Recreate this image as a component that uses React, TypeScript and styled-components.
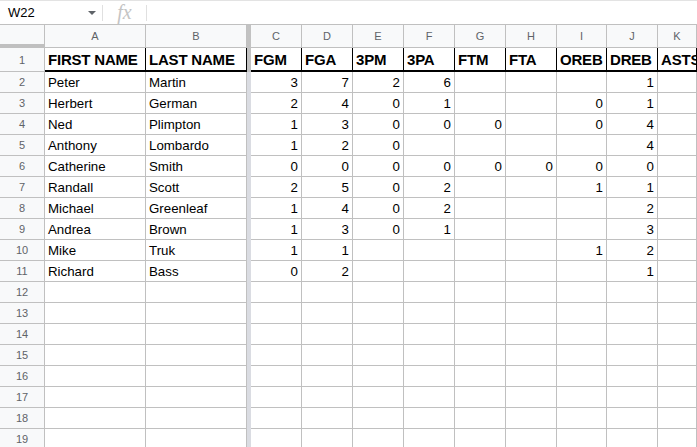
import React from 'react'
import styled, { createGlobalStyle } from 'styled-components'

const GlobalStyle = createGlobalStyle`
  html, body {
    margin: 0;
    padding: 0;
    background: #fff;
    overflow: hidden;
  }
  body {
    font-family: 'Liberation Sans', Arial, sans-serif;
  }
`

const GRID = '#c0c0c0'

const FormulaBar = styled.div`
  display: flex;
  align-items: center;
  height: 25px;
  box-sizing: border-box;
  border-top: 1px solid #e3e3e3;
  border-bottom: 1px solid ${GRID};
  background: #fff;
`

const NameBox = styled.div`
  position: relative;
  display: flex;
  align-items: center;
  width: 102px;
  height: 100%;
  padding-left: 8px;
  box-sizing: border-box;
  font-size: 13px;
  color: #000;
`

const Caret = styled.span`
  position: absolute;
  right: 6px;
  top: 10px;
  width: 0;
  height: 0;
  border-left: 4px solid transparent;
  border-right: 4px solid transparent;
  border-top: 4px solid #5f6368;
`

const Divider = styled.div`
  width: 1px;
  height: 16px;
  background: #e0e0e0;
`

const FxLabel = styled.div`
  width: 43px;
  display: flex;
  justify-content: center;
  align-items: center;
  font-family: 'Liberation Serif', 'Times New Roman', serif;
  font-style: italic;
  font-size: 20px;
  color: #c4c4c4;
  line-height: 1;
  padding-bottom: 2px;
`

const Sheet = styled.div`
  display: grid;
  grid-template-columns: 45px 101px 101px 4px repeat(6, 51px) 50px 51px 1fr;
  grid-template-rows: 23px 24px;
  grid-auto-rows: 21px;
  overflow: hidden;
`

const Corner = styled.div`
  background: #f8f9fa;
  border-right: 1px solid ${GRID};
  border-bottom: 4px solid ${GRID};
`

const ColHead = styled.div`
  display: flex;
  align-items: center;
  justify-content: center;
  background: #f8f9fa;
  border-right: 1px solid ${GRID};
  border-bottom: 1px solid ${GRID};
  font-size: 11px;
  color: #5f6368;
  overflow: hidden;
  white-space: nowrap;
`

const FreezeBar = styled.div<{ $dark?: boolean }>`
  background: ${({ $dark }) => ($dark ? '#c2c2c2' : '#dadce2')};
`

const RowHead = styled.div`
  display: flex;
  align-items: center;
  justify-content: center;
  background: #f8f9fa;
  border-right: 1px solid ${GRID};
  border-bottom: 1px solid ${GRID};
  font-size: 11px;
  color: #5f6368;
`

const TitleCell = styled.div`
  display: flex;
  align-items: flex-end;
  padding: 0 3px 2px;
  border-right: 1px solid #000;
  border-bottom: 2px solid #000;
  font-size: 15px;
  font-weight: bold;
  color: #000;
  white-space: nowrap;
  overflow: hidden;
  letter-spacing: -0.2px;
`

const Cell = styled.div<{ $num?: boolean }>`
  display: flex;
  align-items: center;
  justify-content: ${({ $num }) => ($num ? 'flex-end' : 'flex-start')};
  padding: 1px 3px 0;
  border-right: 1px solid ${GRID};
  border-bottom: 1px solid ${GRID};
  font-size: 13.3px;
  color: #000;
  white-space: nowrap;
  overflow: hidden;
`

const letters = ['A', 'B', 'C', 'D', 'E', 'F', 'G', 'H', 'I', 'J', 'K']
const titles = ['FIRST NAME', 'LAST NAME', 'FGM', 'FGA', '3PM', '3PA', 'FTM', 'FTA', 'OREB', 'DREB', 'ASTS']

type Row = [string, string, ...(number | null)[]]

const players: Row[] = [
  ['Peter', 'Martin', 3, 7, 2, 6, null, null, null, 1],
  ['Herbert', 'German', 2, 4, 0, 1, null, null, 0, 1],
  ['Ned', 'Plimpton', 1, 3, 0, 0, 0, null, 0, 4],
  ['Anthony', 'Lombardo', 1, 2, 0, null, null, null, null, 4],
  ['Catherine', 'Smith', 0, 0, 0, 0, 0, 0, 0, 0],
  ['Randall', 'Scott', 2, 5, 0, 2, null, null, 1, 1],
  ['Michael', 'Greenleaf', 1, 4, 0, 2, null, null, null, 2],
  ['Andrea', 'Brown', 1, 3, 0, 1, null, null, null, 3],
  ['Mike', 'Truk', 1, 1, null, null, null, null, 1, 2],
  ['Richard', 'Bass', 0, 2, null, null, null, null, null, 1],
]

const TOTAL_ROWS = 19

function renderRow(index: number) {
  const rowNo = index + 1
  const cells: React.ReactNode[] = [<RowHead key="h">{rowNo}</RowHead>]

  if (rowNo === 1) {
    titles.forEach((t, i) => {
      if (i === 2) cells.push(<FreezeBar key="bar" $dark />)
      cells.push(<TitleCell key={t}>{t}</TitleCell>)
    })
    return cells
  }

  const data = players[rowNo - 2]
  for (let c = 0; c < 11; c++) {
    if (c === 2) cells.push(<FreezeBar key="bar" />)
    const v = data ? data[c] : undefined
    const isNum = typeof v === 'number'
    cells.push(
      <Cell key={c} $num={isNum}>
        {v ?? ''}
      </Cell>
    )
  }
  return cells
}

export default function App() {
  return (
    <>
      <GlobalStyle />
      <FormulaBar>
        <NameBox>
          W22
          <Caret />
        </NameBox>
        <Divider />
        <FxLabel>fx</FxLabel>
        <Divider />
      </FormulaBar>
      <Sheet>
        <Corner />
        {letters.map((l, i) => (
          <React.Fragment key={l}>
            {i === 2 && <FreezeBar $dark />}
            <ColHead>{l}</ColHead>
          </React.Fragment>
        ))}
        {Array.from({ length: TOTAL_ROWS }, (_, i) => (
          <React.Fragment key={i}>{renderRow(i)}</React.Fragment>
        ))}
      </Sheet>
    </>
  )
}
